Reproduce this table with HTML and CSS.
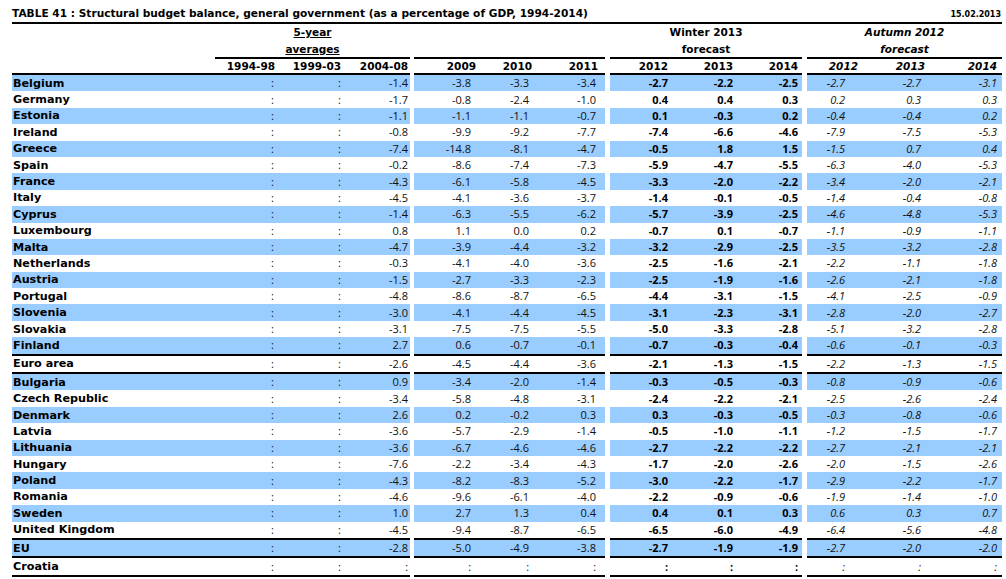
FILE: index.html
```html
<!DOCTYPE html>
<html>
<head>
<meta charset="utf-8">
<link rel="stylesheet" href="styles.css">
</head>
<body>
<div class="page">
  <div class="titlebar"><span class="title">TABLE 41 : Structural budget balance, general government (as a percentage of GDP, 1994-2014)</span><span class="date">15.02.2013</span></div>
  <table class="t">
    <colgroup>
      <col class="w-lab"><col class="w-c1"><col class="w-c2"><col class="w-c3"><col class="w-g1">
      <col class="w-c4"><col class="w-c5"><col class="w-c6"><col class="w-g2">
      <col class="w-c7"><col class="w-c8"><col class="w-c9"><col class="w-g2">
      <col class="w-c10"><col class="w-c11"><col class="w-c12">
    </colgroup>
    <thead>
      <tr class="h1"><th></th><th colspan="3" class="u">5-year</th><th class="g"></th><th colspan="3"></th><th class="g"></th><th colspan="3">Winter 2013</th><th class="g"></th><th colspan="3" class="it">Autumn 2012</th></tr>
      <tr class="h2"><th></th><th colspan="3" class="u">averages</th><th class="g"></th><th colspan="3"></th><th class="g"></th><th colspan="3">forecast</th><th class="g"></th><th colspan="3" class="it">forecast</th></tr>
      <tr class="h3"><th class="lab"></th><th>1994-98</th><th>1999-03</th><th>2004-08</th><th class="g"></th><th>2009</th><th>2010</th><th>2011</th><th class="g"></th><th>2012</th><th>2013</th><th>2014</th><th class="g"></th><th class="it">2012</th><th class="it">2013</th><th class="it">2014</th></tr>
    </thead>
    <tbody>
      <tr><td>Belgium</td><td>:</td><td>:</td><td>-1.4</td><td class="g"></td><td>-3.8</td><td>-3.3</td><td>-3.4</td><td class="g"></td><td>-2.7</td><td>-2.2</td><td>-2.5</td><td class="g"></td><td>-2.7</td><td>-2.7</td><td>-3.1</td></tr>
      <tr><td>Germany</td><td>:</td><td>:</td><td>-1.7</td><td class="g"></td><td>-0.8</td><td>-2.4</td><td>-1.0</td><td class="g"></td><td>0.4</td><td>0.4</td><td>0.3</td><td class="g"></td><td>0.2</td><td>0.3</td><td>0.3</td></tr>
      <tr><td>Estonia</td><td>:</td><td>:</td><td>-1.1</td><td class="g"></td><td>-1.1</td><td>-1.1</td><td>-0.7</td><td class="g"></td><td>0.1</td><td>-0.3</td><td>0.2</td><td class="g"></td><td>-0.4</td><td>-0.4</td><td>0.2</td></tr>
      <tr><td>Ireland</td><td>:</td><td>:</td><td>-0.8</td><td class="g"></td><td>-9.9</td><td>-9.2</td><td>-7.7</td><td class="g"></td><td>-7.4</td><td>-6.6</td><td>-4.6</td><td class="g"></td><td>-7.9</td><td>-7.5</td><td>-5.3</td></tr>
      <tr><td>Greece</td><td>:</td><td>:</td><td>-7.4</td><td class="g"></td><td>-14.8</td><td>-8.1</td><td>-4.7</td><td class="g"></td><td>-0.5</td><td>1.8</td><td>1.5</td><td class="g"></td><td>-1.5</td><td>0.7</td><td>0.4</td></tr>
      <tr><td>Spain</td><td>:</td><td>:</td><td>-0.2</td><td class="g"></td><td>-8.6</td><td>-7.4</td><td>-7.3</td><td class="g"></td><td>-5.9</td><td>-4.7</td><td>-5.5</td><td class="g"></td><td>-6.3</td><td>-4.0</td><td>-5.3</td></tr>
      <tr><td>France</td><td>:</td><td>:</td><td>-4.3</td><td class="g"></td><td>-6.1</td><td>-5.8</td><td>-4.5</td><td class="g"></td><td>-3.3</td><td>-2.0</td><td>-2.2</td><td class="g"></td><td>-3.4</td><td>-2.0</td><td>-2.1</td></tr>
      <tr><td>Italy</td><td>:</td><td>:</td><td>-4.5</td><td class="g"></td><td>-4.1</td><td>-3.6</td><td>-3.7</td><td class="g"></td><td>-1.4</td><td>-0.1</td><td>-0.5</td><td class="g"></td><td>-1.4</td><td>-0.4</td><td>-0.8</td></tr>
      <tr><td>Cyprus</td><td>:</td><td>:</td><td>-1.4</td><td class="g"></td><td>-6.3</td><td>-5.5</td><td>-6.2</td><td class="g"></td><td>-5.7</td><td>-3.9</td><td>-2.5</td><td class="g"></td><td>-4.6</td><td>-4.8</td><td>-5.3</td></tr>
      <tr><td>Luxembourg</td><td>:</td><td>:</td><td>0.8</td><td class="g"></td><td>1.1</td><td>0.0</td><td>0.2</td><td class="g"></td><td>-0.7</td><td>0.1</td><td>-0.7</td><td class="g"></td><td>-1.1</td><td>-0.9</td><td>-1.1</td></tr>
      <tr><td>Malta</td><td>:</td><td>:</td><td>-4.7</td><td class="g"></td><td>-3.9</td><td>-4.4</td><td>-3.2</td><td class="g"></td><td>-3.2</td><td>-2.9</td><td>-2.5</td><td class="g"></td><td>-3.5</td><td>-3.2</td><td>-2.8</td></tr>
      <tr><td>Netherlands</td><td>:</td><td>:</td><td>-0.3</td><td class="g"></td><td>-4.1</td><td>-4.0</td><td>-3.6</td><td class="g"></td><td>-2.5</td><td>-1.6</td><td>-2.1</td><td class="g"></td><td>-2.2</td><td>-1.1</td><td>-1.8</td></tr>
      <tr><td>Austria</td><td>:</td><td>:</td><td>-1.5</td><td class="g"></td><td>-2.7</td><td>-3.3</td><td>-2.3</td><td class="g"></td><td>-2.5</td><td>-1.9</td><td>-1.6</td><td class="g"></td><td>-2.6</td><td>-2.1</td><td>-1.8</td></tr>
      <tr><td>Portugal</td><td>:</td><td>:</td><td>-4.8</td><td class="g"></td><td>-8.6</td><td>-8.7</td><td>-6.5</td><td class="g"></td><td>-4.4</td><td>-3.1</td><td>-1.5</td><td class="g"></td><td>-4.1</td><td>-2.5</td><td>-0.9</td></tr>
      <tr><td>Slovenia</td><td>:</td><td>:</td><td>-3.0</td><td class="g"></td><td>-4.1</td><td>-4.4</td><td>-4.5</td><td class="g"></td><td>-3.1</td><td>-2.3</td><td>-3.1</td><td class="g"></td><td>-2.8</td><td>-2.0</td><td>-2.7</td></tr>
      <tr><td>Slovakia</td><td>:</td><td>:</td><td>-3.1</td><td class="g"></td><td>-7.5</td><td>-7.5</td><td>-5.5</td><td class="g"></td><td>-5.0</td><td>-3.3</td><td>-2.8</td><td class="g"></td><td>-5.1</td><td>-3.2</td><td>-2.8</td></tr>
      <tr><td>Finland</td><td>:</td><td>:</td><td>2.7</td><td class="g"></td><td>0.6</td><td>-0.7</td><td>-0.1</td><td class="g"></td><td>-0.7</td><td>-0.3</td><td>-0.4</td><td class="g"></td><td>-0.6</td><td>-0.1</td><td>-0.3</td></tr>
      <tr class="sep"><td>Euro area</td><td>:</td><td>:</td><td>-2.6</td><td class="g"></td><td>-4.5</td><td>-4.4</td><td>-3.6</td><td class="g"></td><td>-2.1</td><td>-1.3</td><td>-1.5</td><td class="g"></td><td>-2.2</td><td>-1.3</td><td>-1.5</td></tr>
      <tr class="sep"><td>Bulgaria</td><td>:</td><td>:</td><td>0.9</td><td class="g"></td><td>-3.4</td><td>-2.0</td><td>-1.4</td><td class="g"></td><td>-0.3</td><td>-0.5</td><td>-0.3</td><td class="g"></td><td>-0.8</td><td>-0.9</td><td>-0.6</td></tr>
      <tr><td>Czech Republic</td><td>:</td><td>:</td><td>-3.4</td><td class="g"></td><td>-5.8</td><td>-4.8</td><td>-3.1</td><td class="g"></td><td>-2.4</td><td>-2.2</td><td>-2.1</td><td class="g"></td><td>-2.5</td><td>-2.6</td><td>-2.4</td></tr>
      <tr><td>Denmark</td><td>:</td><td>:</td><td>2.6</td><td class="g"></td><td>0.2</td><td>-0.2</td><td>0.3</td><td class="g"></td><td>0.3</td><td>-0.3</td><td>-0.5</td><td class="g"></td><td>-0.3</td><td>-0.8</td><td>-0.6</td></tr>
      <tr><td>Latvia</td><td>:</td><td>:</td><td>-3.6</td><td class="g"></td><td>-5.7</td><td>-2.9</td><td>-1.4</td><td class="g"></td><td>-0.5</td><td>-1.0</td><td>-1.1</td><td class="g"></td><td>-1.2</td><td>-1.5</td><td>-1.7</td></tr>
      <tr><td>Lithuania</td><td>:</td><td>:</td><td>-3.6</td><td class="g"></td><td>-6.7</td><td>-4.6</td><td>-4.6</td><td class="g"></td><td>-2.7</td><td>-2.2</td><td>-2.2</td><td class="g"></td><td>-2.7</td><td>-2.1</td><td>-2.1</td></tr>
      <tr><td>Hungary</td><td>:</td><td>:</td><td>-7.6</td><td class="g"></td><td>-2.2</td><td>-3.4</td><td>-4.3</td><td class="g"></td><td>-1.7</td><td>-2.0</td><td>-2.6</td><td class="g"></td><td>-2.0</td><td>-1.5</td><td>-2.6</td></tr>
      <tr><td>Poland</td><td>:</td><td>:</td><td>-4.3</td><td class="g"></td><td>-8.2</td><td>-8.3</td><td>-5.2</td><td class="g"></td><td>-3.0</td><td>-2.2</td><td>-1.7</td><td class="g"></td><td>-2.9</td><td>-2.2</td><td>-1.7</td></tr>
      <tr><td>Romania</td><td>:</td><td>:</td><td>-4.6</td><td class="g"></td><td>-9.6</td><td>-6.1</td><td>-4.0</td><td class="g"></td><td>-2.2</td><td>-0.9</td><td>-0.6</td><td class="g"></td><td>-1.9</td><td>-1.4</td><td>-1.0</td></tr>
      <tr><td>Sweden</td><td>:</td><td>:</td><td>1.0</td><td class="g"></td><td>2.7</td><td>1.3</td><td>0.4</td><td class="g"></td><td>0.4</td><td>0.1</td><td>0.3</td><td class="g"></td><td>0.6</td><td>0.3</td><td>0.7</td></tr>
      <tr><td>United Kingdom</td><td>:</td><td>:</td><td>-4.5</td><td class="g"></td><td>-9.4</td><td>-8.7</td><td>-6.5</td><td class="g"></td><td>-6.5</td><td>-6.0</td><td>-4.9</td><td class="g"></td><td>-6.4</td><td>-5.6</td><td>-4.8</td></tr>
      <tr class="sep"><td>EU</td><td>:</td><td>:</td><td>-2.8</td><td class="g"></td><td>-5.0</td><td>-4.9</td><td>-3.8</td><td class="g"></td><td>-2.7</td><td>-1.9</td><td>-1.9</td><td class="g"></td><td>-2.7</td><td>-2.0</td><td>-2.0</td></tr>
      <tr class="sep last"><td>Croatia</td><td>:</td><td>:</td><td>:</td><td class="g"></td><td>:</td><td>:</td><td>:</td><td class="g"></td><td>:</td><td>:</td><td>:</td><td class="g"></td><td>:</td><td>:</td><td>:</td></tr>
    </tbody>
  </table>
</div>
</body>
</html>
```

FILE: styles.css
```css
* { box-sizing: border-box; }
html, body { margin: 0; padding: 0; background: #fff; }
body {
  font-family: "Open Sans", "DejaVu Sans", sans-serif;
  color: #000;
}
.page { width: 1006px; padding-left: 12px; }

.titlebar {
  width: 990px;
  height: 24px;
  border-bottom: 2px solid #000;
  display: flex;
  justify-content: space-between;
  align-items: center;
  padding-top: 3px;
}
.title {
  font-family: "DejaVu Sans", sans-serif;
  font-weight: 700;
  font-size: 10.6px;
}
.date {
  font-family: "DejaVu Sans", sans-serif;
  font-weight: 700;
  font-size: 8px;
  padding-right: 1px;
  padding-top: 3px;
}

table.t {
  width: 990px;
  table-layout: fixed;
  border-collapse: separate;
  border-spacing: 0;
  font-size: 11px;
}
.w-lab { width: 203px; }
.w-c1 { width: 62px; }
.w-c2 { width: 66px; }
.w-c3 { width: 67px; }
.w-g1 { width: 4px; }
.w-c4 { width: 63px; }
.w-c5 { width: 63px; }
.w-c6 { width: 65px; }
.w-g2 { width: 5px; }
.w-c7 { width: 65px; }
.w-c8 { width: 65px; }
.w-c9 { width: 62px; }
.w-c10 { width: 65px; }
.w-c11 { width: 65px; }
.w-c12 { width: 65px; }

th, td {
  padding: 0;
  white-space: nowrap;
  overflow: hidden;
}
th {
  font-family: "DejaVu Sans", sans-serif;
  font-weight: 700;
  font-size: 10.5px;
}
.it { font-style: italic; }

.h1 th { height: 16px; text-align: center; vertical-align: bottom; line-height: 14px; padding-bottom: 1px; }
.h2 th { height: 16.5px; text-align: center; vertical-align: bottom; line-height: 14px; padding-bottom: 1px; }
.u { text-decoration: underline; text-underline-offset: 1px; }

.h3 th {
  height: 18.5px;
  line-height: 14px;
  text-align: right;
  border-top: 2px solid #000;
  border-bottom: 2px solid #000;
}
.h3 th:first-child { border-top: 0; }
.h3 th.g { border: 0; }

tbody td {
  height: 16.4px;
  line-height: 14px;
  text-align: right;
  font-weight: 400;
  color: #111;
}
tbody tr:nth-child(odd) td { background: #99ccff; }
tbody td.g, tbody tr:nth-child(odd) td.g { background: #fff; }
tbody td:first-child {
  font-family: "DejaVu Sans", sans-serif;
  text-align: left;
  font-weight: 700;
  font-size: 11.2px;
  padding-left: 1px;
  padding-top: 1px;
  color: #000;
}

tbody tr.sep td { height: 18.4px; border-top: 2px solid #000; }
tbody tr.sep td.g { border-top: 0; }
tbody tr.last td { height: 20.4px; border-bottom: 2px solid #000; }
tbody tr.last td.g { border-bottom: 0; }

/* winter forecast: bold; autumn: italic */
tbody td:nth-child(10), tbody td:nth-child(11), tbody td:nth-child(12) { font-weight: 700; color: #000; }
tbody td:nth-child(14), tbody td:nth-child(15), tbody td:nth-child(16) { font-style: italic; }

/* header right paddings */
.h3 th:nth-child(2) { padding-right: 2px; }
.h3 th:nth-child(3) { padding-right: 2px; }
.h3 th:nth-child(4) { padding-right: 2px; }
.h3 th:nth-child(6) { padding-right: 1px; }
.h3 th:nth-child(7) { padding-right: 8px; }
.h3 th:nth-child(8) { padding-right: 7px; }
.h3 th:nth-child(10) { padding-right: 7px; }
.h3 th:nth-child(11) { padding-right: 7px; }
.h3 th:nth-child(12) { padding-right: 4px; }
.h3 th:nth-child(14) { padding-right: 14px; }
.h3 th:nth-child(15) { padding-right: 12px; }
.h3 th:nth-child(16) { padding-right: 5px; }

/* value right paddings */
tbody td:nth-child(2) { padding-right: 3px; }
tbody td:nth-child(3) { padding-right: 2px; }
tbody td:nth-child(4) { padding-right: 2px; }
tbody td:nth-child(6) { padding-right: 6px; }
tbody td:nth-child(7) { padding-right: 11px; }
tbody td:nth-child(8) { padding-right: 9px; }
tbody td:nth-child(10) { padding-right: 7px; }
tbody td:nth-child(11) { padding-right: 7px; }
tbody td:nth-child(12) { padding-right: 4px; }
tbody td:nth-child(14) { padding-right: 27px; }
tbody td:nth-child(15) { padding-right: 16px; }
tbody td:nth-child(16) { padding-right: 5px; }
```
